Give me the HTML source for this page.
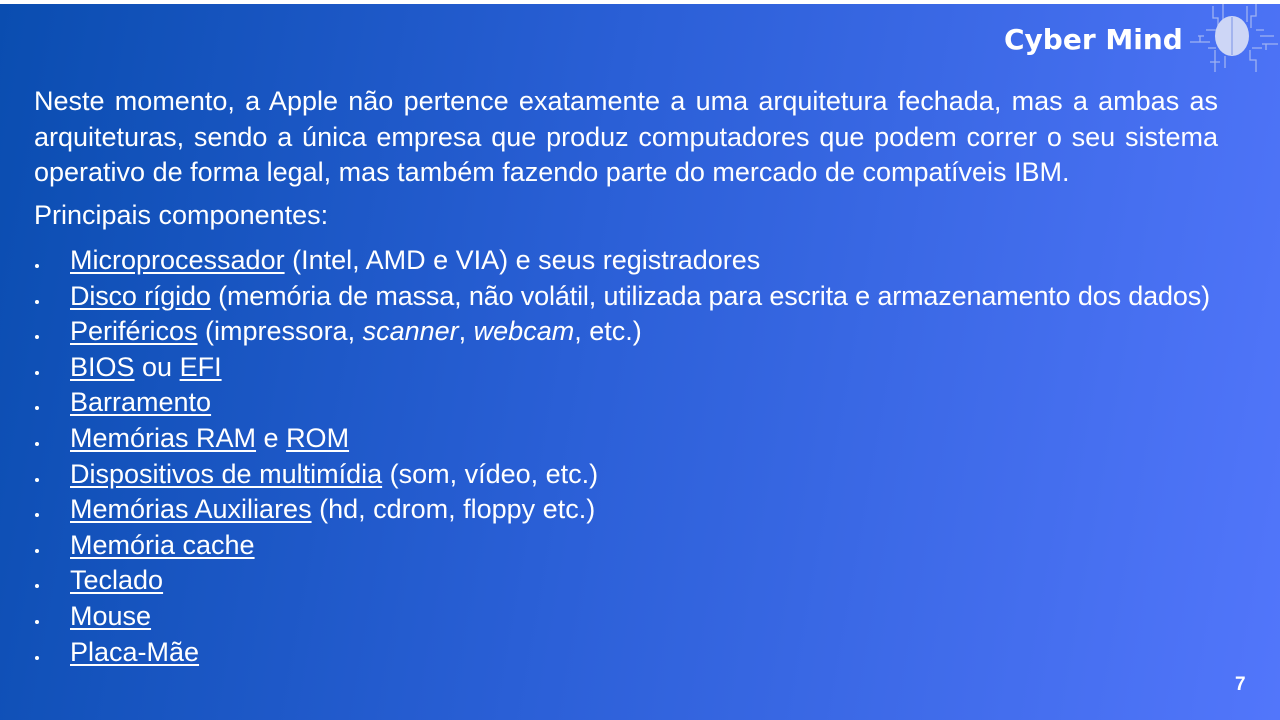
<!DOCTYPE html>
<html><head><meta charset="utf-8"><style>
html,body{margin:0;padding:0}
body{width:1280px;height:720px;overflow:hidden;position:relative;font-family:"Liberation Sans",Arial,sans-serif;color:#fff;
background:linear-gradient(100deg,#0a4db0 0%,#2a5fd6 45%,#5276fb 100%);}
.top{position:absolute;left:0;top:0;width:1280px;height:4px;background:#fff}
.logo{position:absolute;left:1004px;top:23px;font-size:28px;font-weight:bold;color:#fff;font-family:"DejaVu Sans","Liberation Sans",sans-serif}
.p{position:absolute;left:34px;top:84px;width:1184px;font-size:27px;line-height:35.5px;text-align:justify;text-align-last:left}
.h{position:absolute;left:34px;top:200px;font-size:27px}
ul{position:absolute;left:34px;top:243px;margin:0;padding:0;list-style:none;font-size:27px}
li{height:35.6px;line-height:35.6px;position:relative;padding-left:36px;white-space:nowrap}
li:before{content:"";position:absolute;left:1px;top:21px;width:4px;height:4px;border-radius:50%;background:#fff}
li.t{letter-spacing:-0.15px}
u{text-underline-offset:3px}
.n{position:absolute;left:1235px;top:674px;font-size:19px;font-weight:bold}
</style></head><body>
<div class="top"></div>
<div class="logo">Cyber Mind</div>
<svg style="position:absolute;left:1180px;top:0" width="100" height="80" viewBox="0 0 100 80">
<g stroke="#9fb2f2" stroke-width="1.3" fill="none">
<path d="M33 6V18H38V28M43 4V22M67 6V22M76 4V16H71V28"/>
<path d="M10 42H30M20 42V36M18 36H24M80 36H94M82 44H98M86 44V50"/>
<path d="M35 50V62M30 62H40M35 62V72M70 50V60H76V72M45 56V68"/>
<path d="M28 48H36M72 48H82M26 30H36M76 30H84"/>
</g>
<ellipse cx="52" cy="36" rx="17" ry="20" fill="#cdd6f6"/>
<path d="M52 17V55" stroke="#95a8ec" stroke-width="1.5"/>
</svg>
<div class="p">Neste momento, a Apple não pertence exatamente a uma arquitetura fechada, mas a ambas as arquiteturas, sendo a única empresa que produz computadores que podem correr o seu sistema operativo de forma legal, mas também fazendo parte do mercado de compatíveis IBM.</div>
<div class="h">Principais componentes:</div>
<ul>
<li><u>Microprocessador</u> (Intel, AMD e VIA) e seus registradores</li>
<li class="t"><u>Disco rígido</u> (memória de massa, não volátil, utilizada para escrita e armazenamento dos dados)</li>
<li><u>Periféricos</u> (impressora, <i>scanner</i>, <i>webcam</i>, etc.)</li>
<li><u>BIOS</u> ou <u>EFI</u></li>
<li><u>Barramento</u></li>
<li><u>Memórias RAM</u> e <u>ROM</u></li>
<li><u>Dispositivos de multimídia</u> (som, vídeo, etc.)</li>
<li><u>Memórias Auxiliares</u> (hd, cdrom, floppy etc.)</li>
<li><u>Memória cache</u></li>
<li><u>Teclado</u></li>
<li><u>Mouse</u></li>
<li><u>Placa-Mãe</u></li>
</ul>
<div class="n">7</div>
</body></html>
